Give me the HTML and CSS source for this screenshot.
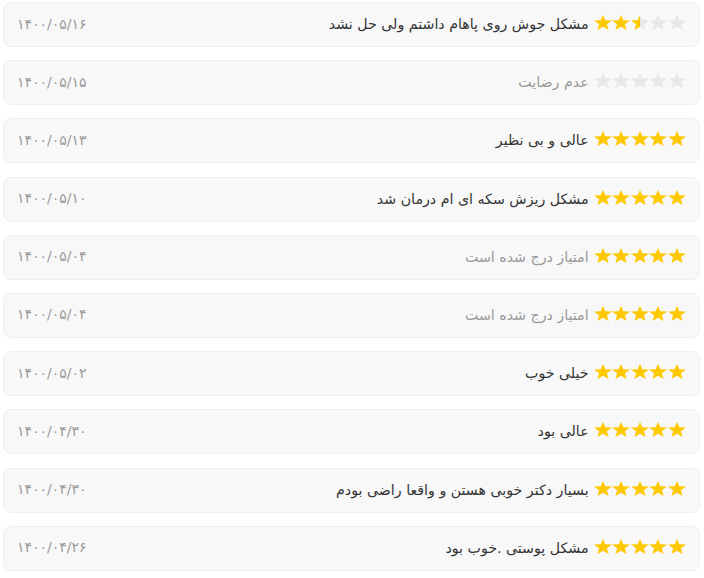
FILE: index.html
```html
<!DOCTYPE html>
<html lang="fa">
<head>
<meta charset="utf-8">
<link rel="stylesheet" href="styles.css">
</head>
<body>
<svg width="0" height="0" class="defs">
  <defs>
    <polygon id="star" points="10,0 12.6,6.6 20,7.1 14.3,11.7 16.2,19 10,15 3.8,19 5.7,11.7 0,7.1 7.4,6.6"/>
    <clipPath id="half"><rect x="0" y="0" width="10" height="20"/></clipPath>
  </defs>
</svg>
<div class="list">
  <div class="card">
    <div class="main">
      <div class="stars">
        <svg viewBox="0 0 20 19" preserveAspectRatio="none" class="star on"><use href="#star"/></svg>
        <svg viewBox="0 0 20 19" preserveAspectRatio="none" class="star on"><use href="#star"/></svg>
        <svg viewBox="0 0 20 19" preserveAspectRatio="none" class="star half"><use href="#star" class="bg"/><use href="#star" class="fg" clip-path="url(#half)"/></svg>
        <svg viewBox="0 0 20 19" preserveAspectRatio="none" class="star"><use href="#star"/></svg>
        <svg viewBox="0 0 20 19" preserveAspectRatio="none" class="star"><use href="#star"/></svg>
      </div>
      <span class="text">مشکل جوش روی پاهام داشتم ولی حل نشد</span>
    </div>
    <span class="date">۱۴۰۰/۰۵/۱۶</span>
  </div>
  <div class="card">
    <div class="main">
      <div class="stars">
        <svg viewBox="0 0 20 19" preserveAspectRatio="none" class="star"><use href="#star"/></svg>
        <svg viewBox="0 0 20 19" preserveAspectRatio="none" class="star"><use href="#star"/></svg>
        <svg viewBox="0 0 20 19" preserveAspectRatio="none" class="star"><use href="#star"/></svg>
        <svg viewBox="0 0 20 19" preserveAspectRatio="none" class="star"><use href="#star"/></svg>
        <svg viewBox="0 0 20 19" preserveAspectRatio="none" class="star"><use href="#star"/></svg>
      </div>
      <span class="text muted">عدم رضایت</span>
    </div>
    <span class="date">۱۴۰۰/۰۵/۱۵</span>
  </div>
  <div class="card">
    <div class="main">
      <div class="stars full">
        <svg viewBox="0 0 20 19" preserveAspectRatio="none" class="star on"><use href="#star"/></svg>
        <svg viewBox="0 0 20 19" preserveAspectRatio="none" class="star on"><use href="#star"/></svg>
        <svg viewBox="0 0 20 19" preserveAspectRatio="none" class="star on"><use href="#star"/></svg>
        <svg viewBox="0 0 20 19" preserveAspectRatio="none" class="star on"><use href="#star"/></svg>
        <svg viewBox="0 0 20 19" preserveAspectRatio="none" class="star on"><use href="#star"/></svg>
      </div>
      <span class="text">عالی و بی نظیر</span>
    </div>
    <span class="date">۱۴۰۰/۰۵/۱۳</span>
  </div>
  <div class="card">
    <div class="main">
      <div class="stars full">
        <svg viewBox="0 0 20 19" preserveAspectRatio="none" class="star on"><use href="#star"/></svg>
        <svg viewBox="0 0 20 19" preserveAspectRatio="none" class="star on"><use href="#star"/></svg>
        <svg viewBox="0 0 20 19" preserveAspectRatio="none" class="star on"><use href="#star"/></svg>
        <svg viewBox="0 0 20 19" preserveAspectRatio="none" class="star on"><use href="#star"/></svg>
        <svg viewBox="0 0 20 19" preserveAspectRatio="none" class="star on"><use href="#star"/></svg>
      </div>
      <span class="text">مشکل ریزش سکه ای ام درمان شد</span>
    </div>
    <span class="date">۱۴۰۰/۰۵/۱۰</span>
  </div>
  <div class="card">
    <div class="main">
      <div class="stars full">
        <svg viewBox="0 0 20 19" preserveAspectRatio="none" class="star on"><use href="#star"/></svg>
        <svg viewBox="0 0 20 19" preserveAspectRatio="none" class="star on"><use href="#star"/></svg>
        <svg viewBox="0 0 20 19" preserveAspectRatio="none" class="star on"><use href="#star"/></svg>
        <svg viewBox="0 0 20 19" preserveAspectRatio="none" class="star on"><use href="#star"/></svg>
        <svg viewBox="0 0 20 19" preserveAspectRatio="none" class="star on"><use href="#star"/></svg>
      </div>
      <span class="text muted">امتیاز درج شده است</span>
    </div>
    <span class="date">۱۴۰۰/۰۵/۰۴</span>
  </div>
  <div class="card">
    <div class="main">
      <div class="stars full">
        <svg viewBox="0 0 20 19" preserveAspectRatio="none" class="star on"><use href="#star"/></svg>
        <svg viewBox="0 0 20 19" preserveAspectRatio="none" class="star on"><use href="#star"/></svg>
        <svg viewBox="0 0 20 19" preserveAspectRatio="none" class="star on"><use href="#star"/></svg>
        <svg viewBox="0 0 20 19" preserveAspectRatio="none" class="star on"><use href="#star"/></svg>
        <svg viewBox="0 0 20 19" preserveAspectRatio="none" class="star on"><use href="#star"/></svg>
      </div>
      <span class="text muted">امتیاز درج شده است</span>
    </div>
    <span class="date">۱۴۰۰/۰۵/۰۴</span>
  </div>
  <div class="card">
    <div class="main">
      <div class="stars full">
        <svg viewBox="0 0 20 19" preserveAspectRatio="none" class="star on"><use href="#star"/></svg>
        <svg viewBox="0 0 20 19" preserveAspectRatio="none" class="star on"><use href="#star"/></svg>
        <svg viewBox="0 0 20 19" preserveAspectRatio="none" class="star on"><use href="#star"/></svg>
        <svg viewBox="0 0 20 19" preserveAspectRatio="none" class="star on"><use href="#star"/></svg>
        <svg viewBox="0 0 20 19" preserveAspectRatio="none" class="star on"><use href="#star"/></svg>
      </div>
      <span class="text">خیلی خوب</span>
    </div>
    <span class="date">۱۴۰۰/۰۵/۰۲</span>
  </div>
  <div class="card">
    <div class="main">
      <div class="stars full">
        <svg viewBox="0 0 20 19" preserveAspectRatio="none" class="star on"><use href="#star"/></svg>
        <svg viewBox="0 0 20 19" preserveAspectRatio="none" class="star on"><use href="#star"/></svg>
        <svg viewBox="0 0 20 19" preserveAspectRatio="none" class="star on"><use href="#star"/></svg>
        <svg viewBox="0 0 20 19" preserveAspectRatio="none" class="star on"><use href="#star"/></svg>
        <svg viewBox="0 0 20 19" preserveAspectRatio="none" class="star on"><use href="#star"/></svg>
      </div>
      <span class="text">عالی بود</span>
    </div>
    <span class="date">۱۴۰۰/۰۴/۳۰</span>
  </div>
  <div class="card">
    <div class="main">
      <div class="stars full">
        <svg viewBox="0 0 20 19" preserveAspectRatio="none" class="star on"><use href="#star"/></svg>
        <svg viewBox="0 0 20 19" preserveAspectRatio="none" class="star on"><use href="#star"/></svg>
        <svg viewBox="0 0 20 19" preserveAspectRatio="none" class="star on"><use href="#star"/></svg>
        <svg viewBox="0 0 20 19" preserveAspectRatio="none" class="star on"><use href="#star"/></svg>
        <svg viewBox="0 0 20 19" preserveAspectRatio="none" class="star on"><use href="#star"/></svg>
      </div>
      <span class="text">بسیار دکتر خوبی هستن و واقعا راضی بودم</span>
    </div>
    <span class="date">۱۴۰۰/۰۴/۳۰</span>
  </div>
  <div class="card">
    <div class="main">
      <div class="stars full">
        <svg viewBox="0 0 20 19" preserveAspectRatio="none" class="star on"><use href="#star"/></svg>
        <svg viewBox="0 0 20 19" preserveAspectRatio="none" class="star on"><use href="#star"/></svg>
        <svg viewBox="0 0 20 19" preserveAspectRatio="none" class="star on"><use href="#star"/></svg>
        <svg viewBox="0 0 20 19" preserveAspectRatio="none" class="star on"><use href="#star"/></svg>
        <svg viewBox="0 0 20 19" preserveAspectRatio="none" class="star on"><use href="#star"/></svg>
      </div>
      <span class="text">مشکل پوستی .خوب بود</span>
    </div>
    <span class="date">۱۴۰۰/۰۴/۲۶</span>
  </div>
</div>
</body>
</html>
```
FILE: styles.css
```css
html, body {
  margin: 0;
  padding: 0;
  background: #ffffff;
}
body {
  font-family: "DejaVu Sans", sans-serif;
  font-size: 14px;
  color: #333333;
}
.defs {
  position: absolute;
  width: 0;
  height: 0;
}
.list {
  padding: 2px 4px 0 3px;
  display: flex;
  flex-direction: column;
  gap: 13.2px;
}
.card {
  direction: rtl;
  box-sizing: border-box;
  height: 45px;
  display: flex;
  align-items: center;
  justify-content: space-between;
  background: #f8f8f8;
  border: 1px solid #efefef;
  border-radius: 8px;
  padding: 0 13px 0 13px;
}
.main {
  display: flex;
  align-items: center;
  gap: 5px;
}
.stars {
  direction: ltr;
  display: flex;
  gap: 0.6px;
  margin-top: -4px;
}
.star {
  width: 18px;
  height: 15px;
  display: block;
  fill: #e8e8e8;
}
.star.on {
  fill: #ffc800;
}
.star.half .bg {
  fill: #e8e8e8;
}
.star.half .fg {
  fill: #ffc800;
}
.text {
  color: #333333;
  font-size: 14.2px;
  line-height: 20px;
  margin-top: -1px;
}
.text.muted {
  color: #999999;
}
.date {
  direction: ltr;
  color: #999999;
  font-size: 14px;
  line-height: 20px;
  margin-top: -2px;
}
```
